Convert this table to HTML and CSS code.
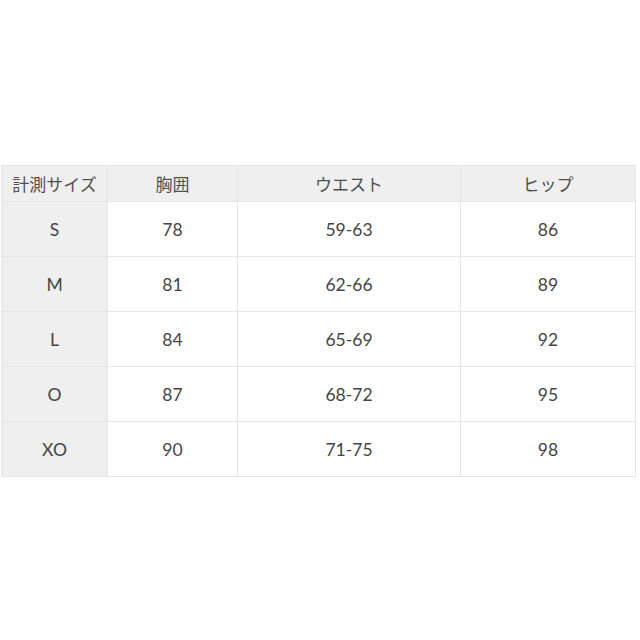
FILE: index.html
```html
<!DOCTYPE html>
<html lang="ja">
<head>
<meta charset="utf-8">
<link rel="stylesheet" href="styles.css">
</head>
<body>
<div class="page">
  <table class="size-table">
    <thead>
      <tr><th class="label">計測サイズ</th><th>胸囲</th><th>ウエスト</th><th>ヒップ</th></tr>
    </thead>
    <tbody>
      <tr><td class="label">S</td><td>78</td><td>59-63</td><td>86</td></tr>
      <tr><td class="label">M</td><td>81</td><td>62-66</td><td>89</td></tr>
      <tr><td class="label">L</td><td>84</td><td>65-69</td><td>92</td></tr>
      <tr><td class="label">O</td><td>87</td><td>68-72</td><td>95</td></tr>
      <tr><td class="label">XO</td><td>90</td><td>71-75</td><td>98</td></tr>
    </tbody>
  </table>
</div>
</body>
</html>
```
FILE: styles.css
```css
html, body {
  margin: 0;
  padding: 0;
  background: #ffffff;
}
.page {
  width: 640px;
  height: 640px;
  padding-top: 165px;
  padding-left: 1px;
  box-sizing: border-box;
}
.size-table {
  border-collapse: collapse;
  table-layout: fixed;
  width: 635px;
  font-family: Lato, "Noto Sans CJK JP", sans-serif;
  color: #454545;
  font-size: 17.5px;
}
.size-table th,
.size-table td {
  border: 1px solid #e6e6e6;
  text-align: center;
  padding: 0;
  font-weight: normal;
}
.size-table th {
  background: #efefef;
  height: 35px;
  font-size: 17px;
  font-family: "Noto Sans CJK JP", sans-serif;
  color: #505050;
}
.size-table td {
  height: 54px;
}
.size-table td.label {
  background: #efefef;
}
.size-table th:nth-child(1) { width: 105px; }
.size-table th:nth-child(2) { width: 129px; }
.size-table th:nth-child(3) { width: 222px; }
.size-table th:nth-child(4) { width: auto; }
```
